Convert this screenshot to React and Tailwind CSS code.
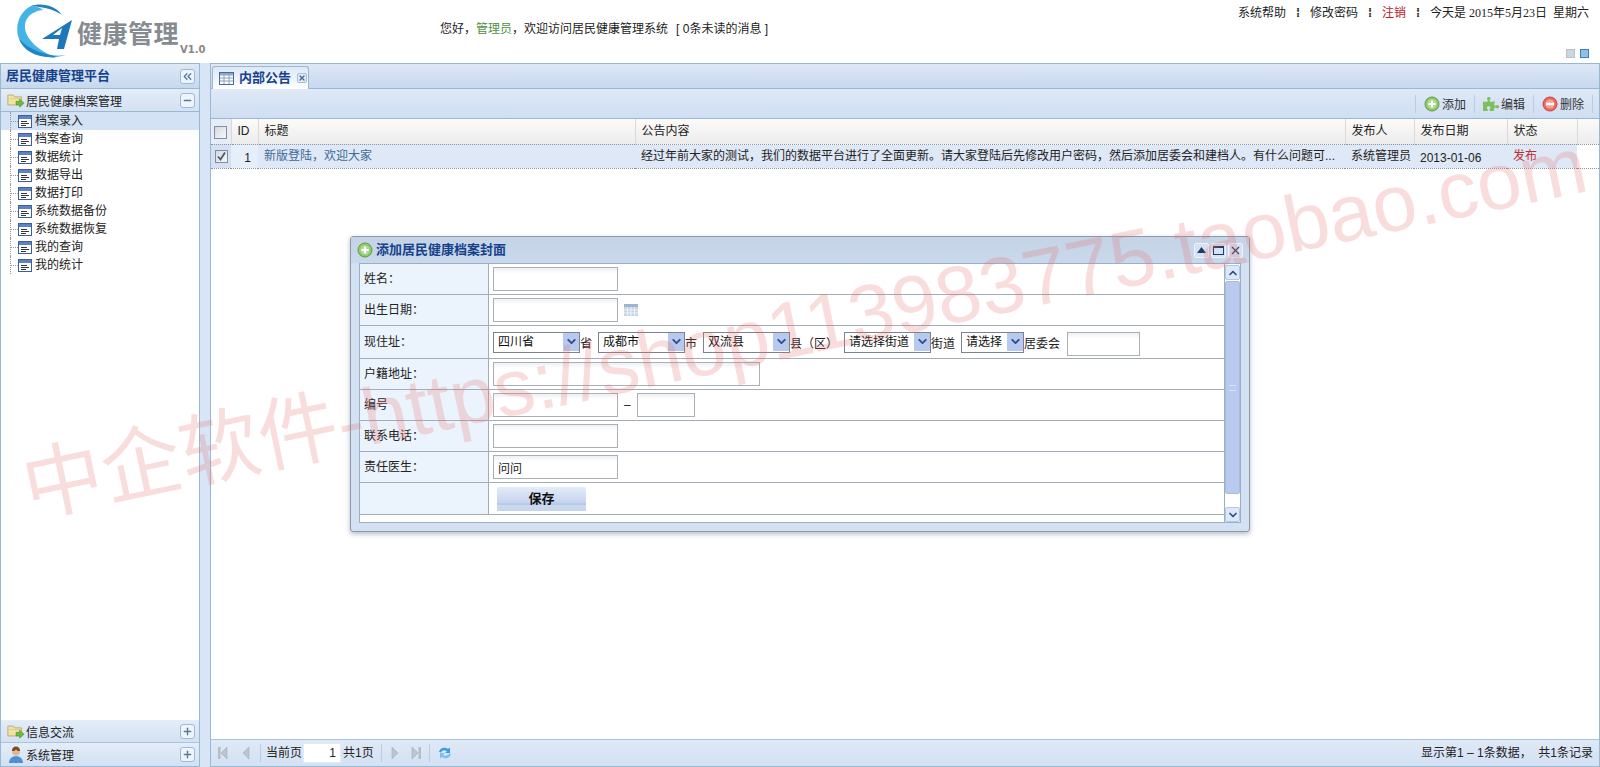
import { FaPuzzlePiece } from 'react-icons/fa'
import { LuChevronDown, LuChevronUp, LuChevronsLeft, LuMinus, LuPlus, LuX } from 'react-icons/lu'

const navItems = ['档案录入', '档案查询', '数据统计', '数据导出', '数据打印', '系统数据备份', '系统数据恢复', '我的查询', '我的统计']

const FolderIcon = () => (
  <svg width="18" height="16" viewBox="0 0 20 17" className="shrink-0">
    <path d="M1 3h6l1.500 2H16v9H1z" fill="#f3e3a2" stroke="#b9a877" />
    <path d="M3 7h12" stroke="#d8c98c" />
    <path d="M10 10h4V7.500l5 4.500-5 4.500V14h-4z" fill="#6dbb3e" stroke="#4b8f28" strokeWidth=".6" />
  </svg>
)

const UserIcon = () => (
  <svg width="18" height="18" viewBox="0 0 18 18" className="shrink-0">
    <circle cx="9" cy="5.500" r="4" fill="#e9b48c" />
    <path d="M5 5c0-3 1.500-4.500 4-4.500S13 2 13 5c-2 0-3-.5-4-1.500C8 4.500 7 5 5 5z" fill="#7a4a2a" />
    <path d="M2 17c0-4 3-7 7-7s7 3 7 7z" fill="#4d8fd6" />
  </svg>
)

const ListIcon = () => (
  <svg width="14" height="13" viewBox="0 0 14 13" className="shrink-0">
    <rect x=".5" y=".5" width="13" height="12" fill="#fff" stroke="#3f5f9c" />
    <rect x="1" y="1" width="12" height="3" fill="#5c82c8" />
    <path d="M3 6.500h6M3 8.500h8M3 10.500h5" stroke="#334" strokeWidth="1" />
  </svg>
)

const CircleIcon = ({ color, edge, children }) => (
  <svg width="16" height="16" viewBox="0 0 16 16" className="shrink-0">
    <circle cx="8" cy="8" r="7" fill={color} stroke={edge} />
    <circle cx="8" cy="8" r="4.500" fill="#fff" fillOpacity=".35" />
    {children}
  </svg>
)

const AddIcon = () => (
  <CircleIcon color="#8fcb6b" edge="#5f9d45">
    <path d="M8 4.500v7M4.500 8h7" stroke="#fff" strokeWidth="2" />
  </CircleIcon>
)

const RemoveIcon = () => (
  <CircleIcon color="#ee6a5f" edge="#c64338">
    <path d="M4 8h8" stroke="#fff" strokeWidth="2.500" />
  </CircleIcon>
)

const PagerIcon = ({ flip, bar }) => (
  <svg width="12" height="14" viewBox="0 0 12 14" className={flip ? 'shrink-0 -scale-x-100' : 'shrink-0'}>
    {bar && <rect x="1" y="1" width="2.500" height="12" fill="#b4bcc8" />}
    <path d="M10 1v12L4 7z" fill="#bcc4d0" stroke="#a5aebb" strokeWidth=".6" />
  </svg>
)

const RefreshIcon = () => (
  <svg width="16" height="16" viewBox="0 0 16 16" className="shrink-0">
    <path d="M2 7c.5-3.500 5-6 9-3l2-1.500V8H8l2-1.800C7.500 4.500 5 5.500 4 7.500z" fill="#3f9ae0" />
    <path d="M14 9c-.5 3.500-5 6-9 3l-2 1.500V8h5l-2 1.800c2.500 1.700 5 .7 6-1.300z" fill="#7cc0ee" />
  </svg>
)

const CheckBox = ({ checked }) => (
  <span className="inline-flex h-[13px] w-[13px] items-center justify-center border border-[#7f8fa3] bg-linear-to-br from-[#d5d9de] to-[#f6f7f8] align-middle">
    {checked && (
      <svg width="11" height="11" viewBox="0 0 11 11">
        <path d="M2 5.500l2.500 3L9 1.500" fill="none" stroke="#4a5a72" strokeWidth="1.800" />
      </svg>
    )}
  </span>
)

const ToggleButton = ({ children }) => (
  <span className="flex h-[15px] w-[15px] items-center justify-center rounded-[3px] border border-[#9db9d6] bg-[#eef4fb] text-[#5a7898]">
    {children}
  </span>
)

const AccordionHead = ({ icon, title, toggle, className }) => (
  <div className={`flex items-center pl-[6px] pr-[4px] bg-linear-to-b from-[#e4edf8] to-[#d3e1f3] ${className}`}>
    {icon}
    <span className="ml-[1px] mt-[3px] flex-1 text-[#222]">{title}</span>
    <ToggleButton>{toggle}</ToggleButton>
  </div>
)

const NavItem = ({ label, active, last }) => (
  <div className={`flex h-[18px] items-center pl-[9px] ${active ? 'bg-[#d4e2f5]' : ''}`}>
    <span className={`h-[18px] border-l border-dotted border-[#999] ${last ? 'h-[9px] self-start' : ''}`} />
    <span className="w-[7px] border-t border-dotted border-[#999]" />
    <ListIcon />
    <span className="ml-[3px] leading-[14px] text-[#222]">{label}</span>
  </div>
)

const ToolButton = ({ icon, label }) => (
  <div className="flex h-[18px] items-center gap-[2px] border-l border-[#b9cce3] pl-[8px] pr-[8px] text-[#333]">
    {icon}
    <span className="mt-[3px]">{label}</span>
  </div>
)

const TextInput = ({ className = 'w-[125px]', value = '' }) => (
  <input
    readOnly
    value={value}
    className={`h-[24px] border border-[#a9b0b8] bg-linear-to-b from-[#eef0f2] to-[#fff] to-[25%] px-[4px] text-[12px] text-[#222] outline-none ${className}`}
  />
)

const SelectBox = ({ value, className }) => (
  <div className={`relative h-[21px] shrink-0 ${className}`}>
    <select
      value={value}
      onChange={() => {}}
      className="h-full w-full appearance-none rounded-none border border-[#7b8290] bg-white pb-[3px] pl-[4px] text-[12px] text-[#111] outline-none"
    >
      <option>{value}</option>
    </select>
    <span className="pointer-events-none absolute right-[1px] top-[1px] flex h-[18px] w-[16px] items-center justify-center bg-[#b7c9ee] text-[#2f4f86]">
      <LuChevronDown size={13} strokeWidth={3.500} />
    </span>
  </div>
)

const FormRow = ({ label, className = 'h-[31px]', children }) => (
  <div className={`flex border-b border-[#a3acb7] ${className}`}>
    <div className="flex w-[129px] shrink-0 items-center border-r border-[#a3acb7] bg-[#ebf3fc] pl-[4px] text-[#222]">{label}</div>
    <div className="flex flex-1 items-center pl-[4px]">{children}</div>
  </div>
)

const ScrollButton = ({ children }) => (
  <div className="flex h-[15px] w-[15px] items-center justify-center rounded-[2px] border border-[#b3c6e6] bg-[#dce7f7] text-[#2f4f86]">
    {children}
  </div>
)

const WindowButton = ({ children }) => (
  <span className="flex h-[15px] w-[15px] items-center justify-center rounded-[2px] border border-[#eef3fa] bg-[#d6e2f2] text-[#1f3c68]">
    {children}
  </span>
)

const Logo = () => (
  <svg width="58" height="58" viewBox="0 0 58 58" className="shrink-0">
    <path d="M15 3C5 8-1 20 2 33c4 13 20 21 38 22C26 49 10 38 9 25 8 15 16 8 27 7 23 4 19 3 15 3z" fill="#43b4e4" />
    <path d="M15 3C26-1 40 3 46 12 39 7 29 4 15 3z" fill="#2380bd" />
    <path d="M3 36c5 14 23 22 47 16C36 55 14 48 3 36z" fill="#1f86c4" />
    <path d="M56 17L26 36h17l-2 10h7z" fill="#1c78bb" />
    <path d="M46 25l-9 7h7z" fill="#fff" />
  </svg>
)

export default function App() {
  return (
    <div className="relative flex h-screen w-full flex-col overflow-hidden bg-white font-['Liberation_Sans','Noto_Sans_CJK_SC',sans-serif] text-[12px] text-[#222]">
      {/* header */}
      <header className="flex h-[63px] shrink-0">
        <div className="flex w-[440px] shrink-0 pl-[16px] pt-[3px]">
          <Logo />
          <div className="relative ml-[3px]">
            <div className="mt-[13px] whitespace-nowrap text-[25px] font-bold leading-[36px] tracking-[.5px] text-[#858b90]">健康管理</div>
            <div className="ml-[103px] -mt-[8px] font-['DejaVu_Sans',sans-serif] text-[10px] font-bold leading-[12px] text-[#888]">V1.0</div>
          </div>
        </div>
        <div className="pt-[20px] leading-[18px] whitespace-nowrap">
          您好，<span className="text-[#4f8f3f]">管理员</span>，欢迎访问居民健康管理系统
          <span className="ml-[8px]">[ 0条未读的消息 ]</span>
        </div>
        <div className="ml-auto flex flex-col items-end pr-[11px] pt-[4px]">
          <div className="flex items-center gap-[10px] whitespace-nowrap leading-[18px]">
            <span>系统帮助</span>
            <span className="font-bold">⁞</span>
            <span>修改密码</span>
            <span className="font-bold">⁞</span>
            <span className="text-[#b8202a]">注销</span>
            <span className="font-bold">⁞</span>
            <span className="font-['Liberation_Serif','Noto_Sans_CJK_SC',serif]">今天是 2015年5月23日&nbsp; 星期六</span>
          </div>
          <div className="mt-[27px] flex gap-[5px]">
            <span className="h-[9px] w-[9px] border border-[#b9c0c8] bg-[#cfd5dc]" />
            <span className="h-[9px] w-[9px] border border-[#3f7fb8] bg-[#8fc0e8]" />
          </div>
        </div>
      </header>

      <div className="flex min-h-0 flex-1 bg-[#d7e5f6]">
        {/* sidebar */}
        <aside className="flex w-[200px] shrink-0 flex-col border-x border-y border-[#99b9d1] bg-white">
          <div className="flex h-[25px] shrink-0 items-center border-b border-[#99b9d1] bg-linear-to-b from-[#dfe8f6] to-[#c6d8ef] pl-[5px] pr-[4px]">
            <span className="flex-1 text-[13px] font-bold text-[#15428b]">居民健康管理平台</span>
            <ToggleButton><LuChevronsLeft size={13} strokeWidth={2.500} /></ToggleButton>
          </div>
          <AccordionHead
            className="h-[23px] shrink-0 border-b border-[#99b9d1]"
            icon={<FolderIcon />}
            title="居民健康档案管理"
            toggle={<LuMinus size={11} strokeWidth={3} />}
          />
          <nav className="flex-1">
            {navItems.map((item, i) => (
              <NavItem key={item} label={item} active={i === 0} last={i === navItems.length - 1} />
            ))}
          </nav>
          <AccordionHead
            className="h-[23px] shrink-0 border-b border-[#a9c4dd]"
            icon={<FolderIcon />}
            title="信息交流"
            toggle={<LuPlus size={11} strokeWidth={3} />}
          />
          <AccordionHead
            className="h-[23px] shrink-0"
            icon={<UserIcon />}
            title="系统管理"
            toggle={<LuPlus size={11} strokeWidth={3} />}
          />
        </aside>

        {/* main panel */}
        <main className="ml-[10px] flex min-w-0 flex-1 flex-col border-x border-y border-[#99b9d1] bg-white">
          <div className="flex h-[25px] shrink-0 items-end border-b border-[#99b9d1] bg-linear-to-b from-[#dfe8f6] to-[#c6d8ef] pl-[1px]">
            <div className="-mb-px flex h-[23px] w-[97px] items-center rounded-t-[3px] border border-b-0 border-[#99b9d1] bg-linear-to-b from-[#dce8f7] to-[#fff] pl-[6px]">
              <svg width="15" height="13" viewBox="0 0 15 13" className="shrink-0">
                <rect x=".5" y=".5" width="14" height="12" fill="#fff" stroke="#4a6a8f" />
                <rect x="1" y="1" width="13" height="2.500" fill="#8aa8cc" />
                <path d="M1 6h13M1 9h13M5 3v9M10 3v9" stroke="#8aa0b8" />
              </svg>
              <span className="ml-[5px] text-[13px] font-bold text-[#15428b]">内部公告</span>
              <span className="ml-[6px] flex h-[10px] w-[10px] items-center justify-center rounded-[2px] border border-[#a9bcd4] bg-[#e3ecf7] text-[#4d6a90]">
                <LuX size={8} strokeWidth={4} />
              </span>
            </div>
          </div>
          <div className="flex h-[30px] shrink-0 items-center justify-end border-b border-[#99b9d1] bg-linear-to-b from-[#dfe9f7] to-[#cfdef2] pr-[6px]">
            <ToolButton icon={<AddIcon />} label="添加" />
            <ToolButton icon={<FaPuzzlePiece size={16} color="#7dbf5a" />} label="编辑" />
            <ToolButton icon={<RemoveIcon />} label="删除" />
            <span className="h-[18px] border-l border-[#b9cce3]" />
          </div>

          <div className="min-h-0 flex-1">
            <table className="w-full table-fixed border-collapse">
              <colgroup>
                <col className="w-[20px]" />
                <col className="w-[27px]" />
                <col className="w-[377px]" />
                <col className="w-[710px]" />
                <col className="w-[69px]" />
                <col className="w-[93px]" />
                <col className="w-[70px]" />
                <col />
              </colgroup>
              <thead>
                <tr className="h-[25px] bg-linear-to-b from-[#fdfbfa] to-[#ececec] text-left font-normal text-[#222]">
                  <th className="border-r border-[#d9d9d9] bg-[#e6edf6] text-center font-normal">
                    <CheckBox />
                  </th>
                  <th className="border-r border-[#d9d9d9] pl-[6px] font-normal">ID</th>
                  <th className="border-r border-[#d9d9d9] pl-[6px] font-normal">标题</th>
                  <th className="border-r border-[#d9d9d9] pl-[6px] font-normal">公告内容</th>
                  <th className="border-r border-[#d9d9d9] pl-[6px] font-normal">发布人</th>
                  <th className="border-r border-[#d9d9d9] pl-[6px] font-normal">发布日期</th>
                  <th className="border-r border-[#d9d9d9] pl-[6px] font-normal">状态</th>
                  <th />
                </tr>
              </thead>
              <tbody>
                <tr className="h-[24px] border-y border-dotted border-[#8a94a3] bg-[#dfe8f6]">
                  <td className="bg-[#d5e1f2] text-center">
                    <CheckBox checked />
                  </td>
                  <td className="bg-[#e6eefa] pr-[7px] pt-[3px] text-right">1</td>
                  <td className="pl-[6px] text-[#3d6a96]">新版登陆，欢迎大家</td>
                  <td className="overflow-hidden whitespace-nowrap pl-[6px]">经过年前大家的测试，我们的数据平台进行了全面更新。请大家登陆后先修改用户密码，然后添加居委会和建档人。有什么问题可...</td>
                  <td className="pl-[6px] whitespace-nowrap">系统管理员</td>
                  <td className="pl-[6px] pt-[3px]">2013-01-06</td>
                  <td className="pl-[6px] text-[#c02a30]">发布</td>
                  <td className="bg-white" />
                </tr>
              </tbody>
            </table>
          </div>

          <div className="flex h-[27px] shrink-0 items-center border-t border-[#a9c4dd] bg-linear-to-b from-[#dfe9f7] to-[#d3e1f3] pl-[6px] pr-[6px]">
            <PagerIcon bar />
            <span className="ml-[10px]"><PagerIcon /></span>
            <span className="ml-[9px] h-[18px] border-l border-[#b9cce3]" />
            <span className="ml-[5px]">当前页</span>
            <input readOnly value="1" className="ml-[1px] mr-[2px] h-[20px] w-[38px] border border-[#e4ebf4] bg-white pr-[4px] text-right text-[12px] outline-none" />
            <span>共1页</span>
            <span className="ml-[7px] h-[18px] border-l border-[#b9cce3]" />
            <span className="ml-[8px]"><PagerIcon flip /></span>
            <span className="ml-[8px]"><PagerIcon flip bar /></span>
            <span className="ml-[7px] h-[18px] border-l border-[#b9cce3]" />
            <span className="ml-[7px]"><RefreshIcon /></span>
            <span className="ml-auto whitespace-nowrap">显示第1 – 1条数据，&nbsp; 共1条记录</span>
          </div>
        </main>
      </div>

      {/* dialog window */}
      <section className="absolute left-[350px] top-[236px] flex h-[296px] w-[900px] flex-col rounded-[3px] border border-[#8b99aa] bg-[#d3e1f3] px-[8px] shadow-[0_2px_5px_rgba(90,110,140,0.45)]">
        <div className="-mx-[8px] flex h-[26px] shrink-0 items-center bg-linear-to-b from-[#c4d3e6] to-[#c9d8ea] pl-[6px] pr-[6px]">
          <AddIcon />
          <span className="ml-[3px] flex-1 text-[13px] font-bold text-[#15428b]">添加居民健康档案封面</span>
          <div className="flex gap-[2px]">
            <WindowButton>
              <svg width="9" height="6" viewBox="0 0 9 6"><path d="M4.500 0L9 6H0z" fill="#1f3c68" /></svg>
            </WindowButton>
            <WindowButton>
              <span className="h-[9px] w-[11px] border border-t-2 border-[#1f3c68]" />
            </WindowButton>
            <WindowButton><LuX size={13} strokeWidth={2} /></WindowButton>
          </div>
        </div>
        <div className="flex h-[260px] shrink-0 border border-[#99b0cc] bg-white">
          <div className="min-w-0 flex-1">
            <FormRow label="姓名："><TextInput /></FormRow>
            <FormRow label="出生日期：">
              <TextInput />
              <svg width="14" height="12" viewBox="0 0 14 12" className="ml-[6px]">
                <rect width="14" height="12" fill="#c5d3e6" />
                <rect width="14" height="3" fill="#9fb4d0" />
                <path d="M0 6h14M0 9h14M3.500 3v9M7 3v9M10.500 3v9" stroke="#eef3fa" />
              </svg>
            </FormRow>
            <FormRow label="现住址：" className="h-[33px]">
              <SelectBox value="四川省" className="w-[87px]" />
              <span className="mt-[3px]">省</span>
              <SelectBox value="成都市" className="ml-[6px] w-[87px]" />
              <span className="mt-[3px]">市</span>
              <SelectBox value="双流县" className="ml-[6px] w-[87px]" />
              <span className="mt-[3px] w-[54px] shrink-0 whitespace-nowrap">县（区）</span>
              <SelectBox value="请选择街道" className="w-[87px]" />
              <span className="mt-[3px]">街道</span>
              <SelectBox value="请选择" className="ml-[6px] w-[63px]" />
              <span className="mt-[3px]">居委会</span>
              <TextInput className="ml-[7px] mt-[3px] w-[73px]" />
            </FormRow>
            <FormRow label="户籍地址："><TextInput className="w-[267px]" /></FormRow>
            <FormRow label="编号">
              <TextInput />
              <span className="ml-[6px] w-[13px]">–</span>
              <TextInput className="w-[58px]" />
            </FormRow>
            <FormRow label="联系电话："><TextInput /></FormRow>
            <FormRow label="责任医生："><TextInput value="问问" /></FormRow>
            <FormRow label="" className="h-[32px]">
              <button className="ml-[4px] h-[24px] w-[89px] rounded-t-[2px] bg-[linear-gradient(to_bottom,#e4ecf8,#c4d3ee_68%,#a7bbdc_70%,#cbd9f0_76%,#c6d5ee)] text-[13px] font-bold text-[#111]">
                保存
              </button>
            </FormRow>
          </div>
          <div className="flex w-[16px] shrink-0 flex-col items-center border-l border-[#99b0cc] pt-[1px]">
            <ScrollButton><LuChevronUp size={12} strokeWidth={3.500} /></ScrollButton>
            <div className="mt-[1px] flex h-[213px] w-[15px] items-center justify-center rounded-[2px] border border-[#a9bcdf] bg-[#b9caee]">
              <span className="h-[6px] w-[7px] border-y border-[#dbe5f7] bg-[linear-gradient(transparent_40%,#dbe5f7_40%,#dbe5f7_60%,transparent_60%)]" />
            </div>
            <div className="flex-1" />
            <ScrollButton><LuChevronDown size={12} strokeWidth={3.500} /></ScrollButton>
          </div>
        </div>
      </section>

      {/* watermark */}
      <div className="pointer-events-none absolute left-[24px] top-[450px] origin-left -rotate-[11.800deg] whitespace-nowrap text-[80px] leading-none text-[rgba(232,110,110,0.24)]">
        中企软件-https://shop113983775.taobao.com
      </div>
    </div>
  )
}
